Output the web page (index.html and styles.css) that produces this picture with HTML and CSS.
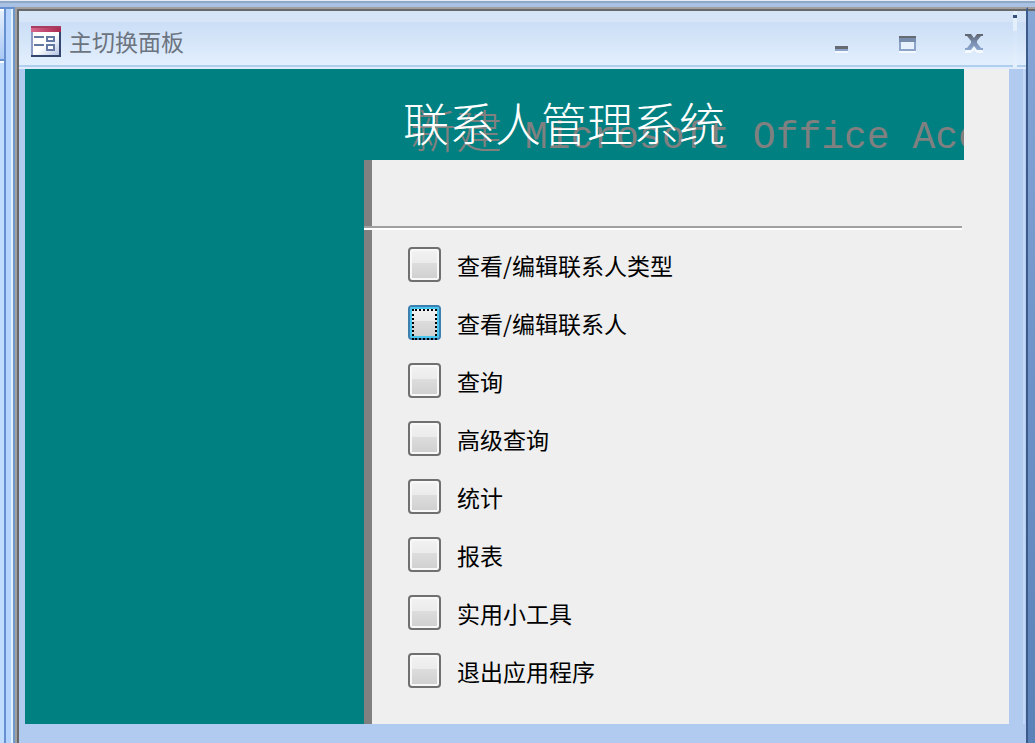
FILE: index.html
```html
<!DOCTYPE html>
<html lang="zh-CN">

<head>
    <meta charset="UTF-8">
    <meta name="viewport" content="width=device-width, initial-scale=1.0">
    <title>主切换面板</title>
    <link rel="stylesheet" href="styles.css">
</head>

<body>
    <div class="app-top"></div>
    <div class="workspace">
        <!-- Collapsed navigation pane -->
        <div class="nav-pane">
            <div class="nav-head"></div>
        </div>
        <div class="splitter"></div>

        <!-- Switchboard window -->
        <main class="window">
            <header class="titlebar">
                <svg class="form-icon" width="30" height="31" viewBox="0 0 30 31" shape-rendering="crispEdges">
                    <defs>
                        <linearGradient id="paper" x1="0" y1="0" x2="1" y2="1">
                            <stop offset="0.5" stop-color="#ffffff" />
                            <stop offset="1" stop-color="#b4c4e4" />
                        </linearGradient>
                        <linearGradient id="band" x1="0" y1="0" x2="1" y2="0">
                            <stop offset="0" stop-color="#d8688c" />
                            <stop offset="1" stop-color="#a82850" />
                        </linearGradient>
                    </defs>
                    <rect width="30" height="31" fill="#34466e" />
                    <rect width="28" height="29" fill="#8c9cc4" />
                    <rect x="2" y="6" width="26" height="23" fill="url(#paper)" />
                    <rect width="30" height="6" fill="url(#band)" />
                    <rect width="30" height="2" fill="#a83c60" />
                    <path d="M3 11h10M3 19h10" stroke="#6478a4" stroke-width="2" />
                    <path d="M16 11h7v4h-7zM16 19h7v5h-7z" fill="#ffffff" stroke="#6478a4" stroke-width="2" />
                </svg>
                <h1>主切换面板</h1>
                <div class="window-buttons">
                    <button type="button" aria-label="最小化">
                        <svg width="18" height="20" viewBox="0 0 18 20" shape-rendering="crispEdges">
                            <path d="M2 13h13v3H2z" fill="#666a72" />
                            <path d="M2 16h13v2H2z" fill="#8ca4c8" />
                            <path d="M2 18h13v2H2z" fill="#f4f9ff" />
                        </svg>
                    </button>
                    <button type="button" aria-label="最大化">
                        <svg width="18" height="20" viewBox="0 0 18 20" shape-rendering="crispEdges">
                            <path d="M0 3h17v15H0z" fill="#8ca4c8" />
                            <path d="M0 3h17v2H0z" fill="#666a72" />
                            <path d="M0 5h17v4H0z" fill="#788cac" />
                            <path d="M2 9h13v7H2z" fill="#e8f2fd" />
                            <path d="M0 18h17v2H0z" fill="#f4f9ff" />
                        </svg>
                    </button>
                    <button type="button" aria-label="关闭">
                        <svg width="18" height="20" viewBox="0 0 18 20">
                            <defs>
                                <linearGradient id="cross" x1="0" y1="0" x2="0" y2="1">
                                    <stop offset="0" stop-color="#60646c" />
                                    <stop offset="0.5" stop-color="#788cac" />
                                    <stop offset="1" stop-color="#8ca8d0" />
                                </linearGradient>
                            </defs>
                            <path d="M0 20v-2l6-5h6l6 5v2h-6l-3-3-3 3z" fill="#f4f9ff" />
                            <path d="M0 1h6l3 4 3-4h6v2h-2l-4 5v2l4 5h2v2h-6l-3-4-3 4H0v-2h2l4-5V8L2 3H0z" fill="url(#cross)" />
                        </svg>
                    </button>
                </div>
                <div class="title-seam"></div>
            </header>

            <div class="form">
                <div class="side"></div>
                <div class="panel">
                    <div class="banner">
                        <p class="banner-shadow" aria-hidden="true">新建<span> Microsoft Office Access</span></p>
                        <h2>联系人管理系统</h2>
                    </div>
                    <div class="panel-body">
                        <hr>
                        <ul class="menu">
                            <li><button type="button" id="opt1"></button><label for="opt1">查看/编辑联系人类型</label></li>
                            <li><button type="button" id="opt2" class="focused"></button><label for="opt2">查看/编辑联系人</label></li>
                            <li><button type="button" id="opt3"></button><label for="opt3">查询</label></li>
                            <li><button type="button" id="opt4"></button><label for="opt4">高级查询</label></li>
                            <li><button type="button" id="opt5"></button><label for="opt5">统计</label></li>
                            <li><button type="button" id="opt6"></button><label for="opt6">报表</label></li>
                            <li><button type="button" id="opt7"></button><label for="opt7">实用小工具</label></li>
                            <li><button type="button" id="opt8"></button><label for="opt8">退出应用程序</label></li>
                        </ul>
                    </div>
                </div>
            </div>
        </main>
        <div class="backdrop"></div>
    </div>
</body>

</html>
```
FILE: styles.css
```css
* {
    margin: 0;
    padding: 0;
    box-sizing: border-box;
}

body {
    min-height: 100vh;
    display: flex;
    flex-direction: column;
    background: #b0caf0;
    font-family: "Noto Sans CJK SC", sans-serif;
    color: #000;
}

/* Application frame */
.app-top {
    height: 7px;
    background: linear-gradient(#e4ebf4 1px, #8ea8c8 1px, #8ea8c8 3px, #a9c2e4 3px);
}

.workspace {
    flex: 1;
    display: flex;
}

.nav-pane {
    width: 6px;
    border-top: 2px solid #6690d0;
    border-right: 2px solid #6690d0;
    background: #c0dcff;
}

.nav-head {
    height: 52px;
    border-top: 2px solid #fff;
    border-bottom: 2px solid #6690d0;
    background: linear-gradient(#e4effd, #a8c8f4);
    box-shadow: 0 2px 0 #fff;
}

.splitter {
    width: 9px;
    border-top: 2px solid #6690d0;
    border-right: 2px solid #6f97cc;
    background: linear-gradient(to right, #b4d4ff 5px, #e0f2ff 5px);
}

.backdrop {
    width: 7px;
    border-top: 2px solid #a0a0a0;
    background: linear-gradient(#696969 2px, #86a6d6 2px, #6f93c8 50%, #5a82b8);
}

/* Window */
.window {
    flex: 1;
    display: flex;
    flex-direction: column;
    border-style: solid;
    border-width: 2px 2px 0;
    border-color: #a0a0a0 #3c5a8a #a0a0a0 #a0a0a0;
    box-shadow: inset 2px 2px 0 #696969;
    padding: 2px 0 19px 2px;
}

.titlebar {
    position: relative;
    height: 58px;
    display: flex;
    align-items: center;
    padding: 0 43px 0 12px;
    border-bottom: 2px solid #e0ecfb;
    background: linear-gradient(#d7e5f8 11px, #cbdef6 11px, #e2effd 54px, #b0ceee 54px);
}

.form-icon {
    margin-top: 4px;
}

.titlebar h1 {
    margin-left: 8px;
    font-size: 23px;
    font-weight: 400;
    line-height: 32px;
    margin-top: 4px;
    color: #6c7480;
}

.window-buttons {
    margin-left: auto;
    margin-top: 8px;
    display: flex;
    gap: 48px;
}

.window-buttons button {
    width: 18px;
    height: 20px;
    border: none;
    background: none;
    cursor: pointer;
}

.window-buttons svg {
    display: block;
}

.title-seam {
    position: absolute;
    top: 0;
    right: 9px;
    width: 4px;
    height: 56px;
    background: linear-gradient(#e4effc 4px, #34507c 4px, #34507c 7px, #e4effc 7px, #e4effc 20px, #d2e3f9 20px, #e6f1fd);
}

/* Form */
.form {
    flex: 1;
    display: flex;
    margin: 0 17px 0 6px;
    background: #efefef;
    box-shadow: 14px 0 0 #b0caf0, 16px 0 0 #c4d8f8;
}

.side {
    flex: 339;
    background: #008080;
}

.panel {
    flex: 600;
    min-width: 0;
    margin-right: 45px;
    display: flex;
    flex-direction: column;
}

.banner {
    position: relative;
    height: 91px;
    padding: 20px 0 0 39px;
    background: #008080;
    overflow: hidden;
}

.banner h2 {
    position: relative;
    font-size: 46px;
    font-weight: 300;
    line-height: 64px;
    color: #fff;
    white-space: nowrap;
}

.banner-shadow {
    position: absolute;
    top: 27px;
    left: 46px;
    font-size: 46px;
    font-weight: 300;
    line-height: 64px;
    color: #808080;
    white-space: nowrap;
}

.banner-shadow span {
    font-family: "Liberation Mono", monospace;
    font-size: 38px;
}

.panel-body {
    flex: 1;
    padding-top: 66px;
    background: linear-gradient(to right, #808080 8px, transparent 8px);
}

.panel-body hr {
    height: 4px;
    margin-right: 2px;
    border: none;
    background: linear-gradient(#a0a0a0 2px, #fff 2px);
}

.menu {
    list-style: none;
    padding: 17px 0 36px 44px;
    display: grid;
    gap: 23px;
}

.menu li {
    display: flex;
    align-items: center;
    gap: 16px;
}

.menu button {
    width: 33px;
    height: 35px;
    border: 2px solid #707070;
    border-radius: 4px;
    background: linear-gradient(#f2f2f2, #ebebeb 45%, #dddddd 45%, #cfcfcf);
    box-shadow: inset 0 0 0 2px #f8f8f8;
    cursor: pointer;
}

.menu button.focused {
    padding: 2px;
    border-color: #3c7fb1;
    box-shadow: inset 0 0 0 2px #48c8f0;
}

.menu button.focused::before {
    content: "";
    display: block;
    height: 100%;
    border: 2px dotted #000;
}

.menu label {
    font-size: 23px;
    line-height: 32px;
    white-space: nowrap;
}
```
